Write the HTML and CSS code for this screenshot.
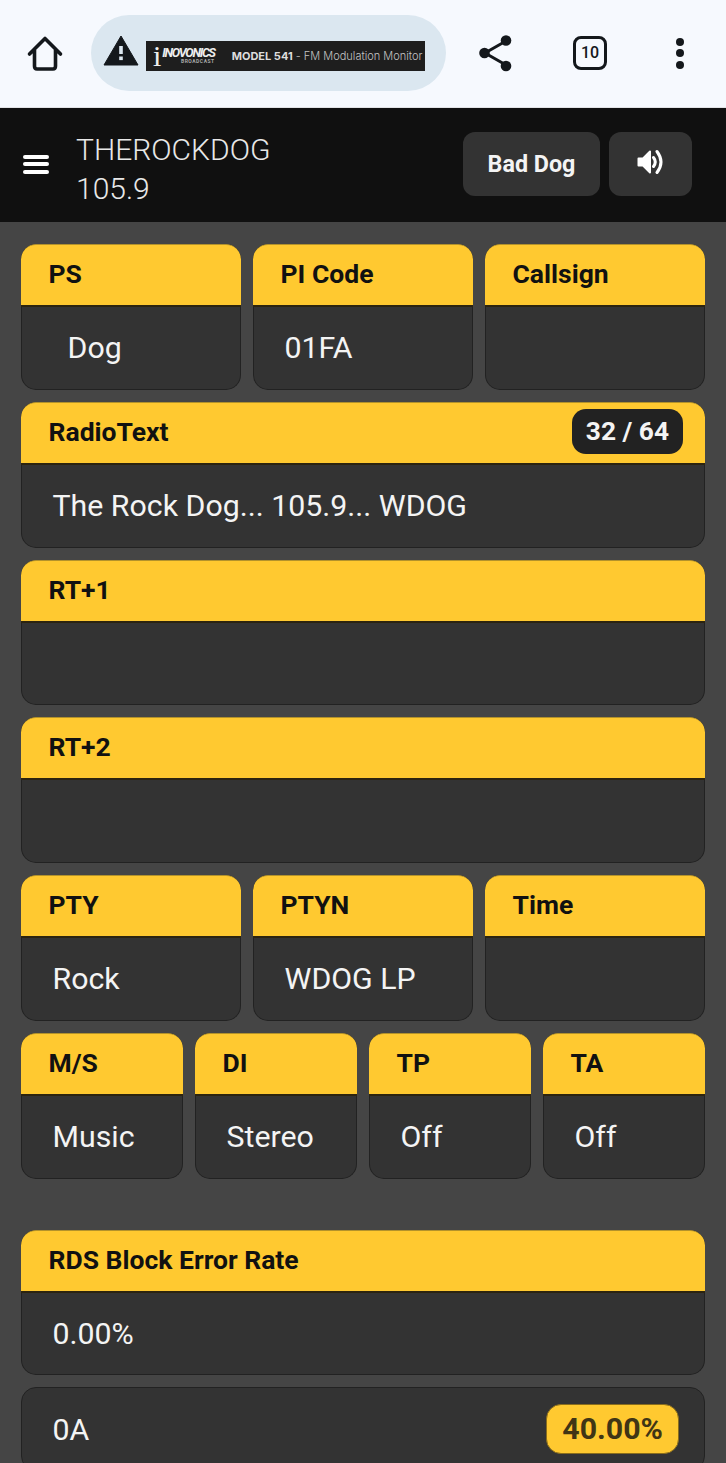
FILE: index.html
```html
<!DOCTYPE html>
<html lang="en">
<head>
    <meta charset="UTF-8">
    <meta name="viewport" content="width=device-width, initial-scale=1.0">
    <title>Inovonics Model 541</title>
    <link rel="stylesheet" href="styles.css">
</head>
<body>
    <!-- browser chrome -->
    <div class="browser-bar">
        <svg class="home-icon" width="38" height="38" viewBox="0 0 38 38">
            <path d="M3.500 20 L19 4.500 L34.500 20 M8.500 16 V32 Q8.500 35 11 35 H27 Q29.500 35 29.500 32 V16" fill="none" stroke="#14181c" stroke-width="3.600" stroke-linejoin="round" stroke-linecap="round"/>
        </svg>
        <div class="url-pill">
            <svg class="warn-icon" width="36" height="32" viewBox="0 0 36 32">
                <path d="M18 1 L35 30 H1 Z" fill="#14181c" stroke="#14181c" stroke-linejoin="round"/>
                <rect x="16.200" y="11" width="3.600" height="8" fill="#dbe7f0"/>
                <rect x="16.200" y="21.500" width="3.600" height="3.600" fill="#dbe7f0"/>
            </svg>
            <div class="page-title">
                <span class="logo-i">i</span>
                <span class="brand">INOVONICS<small>BROADCAST</small></span>
                <span class="model"><b>MODEL 541</b> - FM Modulation Monitor</span>
            </div>
        </div>
        <svg class="share-icon" width="38" height="40" viewBox="0 0 38 40">
            <path d="M29 8 L8 20 L29 32" fill="none" stroke="#14181c" stroke-width="3"/>
            <circle cx="29" cy="7.500" r="5.300" fill="#14181c"/>
            <circle cx="7.500" cy="20" r="5.300" fill="#14181c"/>
            <circle cx="29" cy="33" r="5.300" fill="#14181c"/>
        </svg>
        <div class="tab-count">10</div>
        <div class="more-dots"><i></i><i></i><i></i></div>
    </div>

    <div class="header">
        <div class="burger"><i></i><i></i><i></i></div>
        <div class="station">THEROCKDOG<br>105.9</div>
        <button class="btn btn-dog">Bad Dog</button>
        <button class="btn btn-sound">
            <svg width="28" height="26" viewBox="0 0 28 26">
                <path d="M1.500 9.500 H6 L13 2.500 V23.500 L6 16.500 H1.500 Z" fill="#fff" stroke="#fff" stroke-width="2" stroke-linejoin="round"/>
                <path d="M16.500 8.500 Q20 13 16.500 17.500" fill="none" stroke="#fff" stroke-width="3" stroke-linecap="round"/>
                <path d="M20 2.500 Q28 13 20 23.500" fill="none" stroke="#fff" stroke-width="3" stroke-linecap="round"/>
            </svg>
        </button>
    </div>

    <div class="container">
        <div class="row row-3">
            <div class="card"><div class="card-head">PS</div><div class="card-body ps-value">Dog</div></div>
            <div class="card"><div class="card-head">PI Code</div><div class="card-body">01FA</div></div>
            <div class="card"><div class="card-head">Callsign</div><div class="card-body"></div></div>
        </div>
        <div class="card">
            <div class="card-head">RadioText <span class="count">32 / 64</span></div>
            <div class="card-body">The Rock Dog... 105.9... WDOG</div>
        </div>
        <div class="card"><div class="card-head">RT+1</div><div class="card-body"></div></div>
        <div class="card"><div class="card-head">RT+2</div><div class="card-body"></div></div>
        <div class="row row-3">
            <div class="card"><div class="card-head">PTY</div><div class="card-body">Rock</div></div>
            <div class="card"><div class="card-head">PTYN</div><div class="card-body">WDOG LP</div></div>
            <div class="card"><div class="card-head">Time</div><div class="card-body"></div></div>
        </div>
        <div class="row row-4">
            <div class="card"><div class="card-head">M/S</div><div class="card-body">Music</div></div>
            <div class="card"><div class="card-head">DI</div><div class="card-body">Stereo</div></div>
            <div class="card"><div class="card-head">TP</div><div class="card-body">Off</div></div>
            <div class="card"><div class="card-head">TA</div><div class="card-body">Off</div></div>
        </div>
        <div class="card block-rate">
            <div class="card-head">RDS Block Error Rate</div>
            <div class="card-body">0.00%</div>
        </div>
        <div class="card group-row">
            <span>0A</span>
            <span class="percent">40.00%</span>
        </div>
    </div>
</body>
</html>
```

FILE: styles.css
```css
body {
    margin: 0;
    height: 1463px;
    overflow: hidden;
    background-color: #454545;
    font-family: Roboto, Arial, sans-serif;
    color: #f4f4f4;
}

.browser-bar {
    display: flex;
    align-items: center;
    height: 106px;
    padding: 0 0 1px 26px;
    background-color: #f6f9fe;
    border-bottom: 1px solid #e2e3e6;
}

.home-icon {
    flex: none;
}

.url-pill {
    display: flex;
    align-items: center;
    gap: 7px;
    width: 355px;
    height: 76px;
    margin-left: 27px;
    padding-left: 12px;
    box-sizing: border-box;
    border-radius: 38px;
    background-color: #dbe7f0;
}

.warn-icon {
    margin-bottom: 4px;
}

.page-title {
    display: flex;
    align-items: center;
    width: 279px;
    height: 30px;
    margin-top: 6px;
    padding-left: 7px;
    box-sizing: border-box;
    background-color: #1e1e1e;
    color: #c4c4c4;
    white-space: nowrap;
}

.logo-i {
    font-family: "Liberation Serif", serif;
    font-size: 30px;
    line-height: 30px;
    color: #eee;
}

.brand {
    position: relative;
    top: -1px;
    margin-left: 1px;
    font-size: 12.500px;
    font-weight: 700;
    font-style: italic;
    letter-spacing: -1.300px;
    line-height: 13px;
    color: #eee;
}

.brand small {
    display: block;
    font-size: 5px;
    line-height: 5px;
    letter-spacing: 0.500px;
    font-style: normal;
    text-align: right;
    color: #aaa;
}

.model {
    margin-left: 17px;
    font-family: Inter, Arial, sans-serif;
    font-size: 11px;
    font-weight: 300;
}

.model b {
    font-weight: 700;
    color: #ddd;
}

.share-icon {
    margin-left: 31px;
}

.tab-count {
    width: 28px;
    height: 28px;
    margin-left: 58px;
    border: 3px solid #14181c;
    border-radius: 8px;
    color: #14181c;
    font-size: 16px;
    font-weight: 500;
    line-height: 28px;
    text-align: center;
}

.more-dots {
    display: flex;
    flex-direction: column;
    gap: 3.500px;
    margin-left: 69px;
}

.more-dots i {
    width: 8px;
    height: 8px;
    border-radius: 50%;
    background-color: #14181c;
}

.header {
    display: flex;
    align-items: center;
    height: 114px;
    padding: 0 34px 2px 23px;
    box-sizing: border-box;
    background-color: #101010;
}

.burger {
    display: flex;
    flex-direction: column;
    gap: 3.500px;
    width: 26px;
}

.burger i {
    height: 4px;
    border-radius: 2px;
    background-color: #fff;
}

.station {
    flex: 1;
    margin-left: 27px;
    padding-top: 9px;
    font-size: 30px;
    font-weight: 300;
    line-height: 39px;
    color: #e8e8e8;
}

.btn {
    height: 64px;
    border: none;
    border-radius: 12px;
    background-color: #333;
    color: #f4f4f4;
    font-family: Roboto, Arial, sans-serif;
    font-size: 23.300px;
    font-weight: 700;
}

.btn-dog {
    width: 137px;
}

.btn-sound {
    width: 83px;
    margin-left: 9px;
    padding-top: 3px;
}

.container {
    display: flex;
    flex-direction: column;
    gap: 12px;
    padding: 22px 21px;
}

.row {
    display: grid;
    gap: 12px;
}

.row-3 {
    grid-template-columns: repeat(3, 1fr);
}

.row-4 {
    grid-template-columns: repeat(4, 1fr);
}

.card {
    border-radius: 15px;
    background-color: #333;
    overflow: hidden;
}

.card-head {
    display: flex;
    align-items: center;
    justify-content: space-between;
    height: 63px;
    padding: 0 22px 3px 27.500px;
    box-sizing: border-box;
    background-color: #ffc930;
    border-top: 1px solid #b3922b;
    border-bottom: 2px solid #2c2410;
    border-radius: 15px 15px 0 0;
    color: #111;
    font-size: 26.500px;
    font-weight: 700;
}

.card-body {
    height: 82.750px;
    padding-left: 30.500px;
    box-sizing: border-box;
    border: 1px solid #222;
    border-top: none;
    border-radius: 0 0 15px 15px;
    font-size: 30.300px;
    line-height: 81px;
    color: #f4f4f4;
}

.ps-value {
    padding-left: 45.500px;
}

.count {
    padding: 0 14px;
    border-radius: 14px;
    background-color: #222;
    color: #f4f4f4;
    line-height: 45px;
    font-size: 26.300px;
}

.block-rate {
    margin-top: 39px;
}

.group-row {
    display: flex;
    align-items: center;
    justify-content: space-between;
    height: 82px;
    padding: 0 25px 0 30.500px;
    border: 1px solid #222;
    font-size: 30.300px;
}

.percent {
    padding: 0 15px;
    border: 1px solid #8a6d1c;
    border-radius: 15px;
    background-color: #ffc930;
    color: #403515;
    font-size: 30.300px;
    font-weight: 700;
    line-height: 48px;
}
```
